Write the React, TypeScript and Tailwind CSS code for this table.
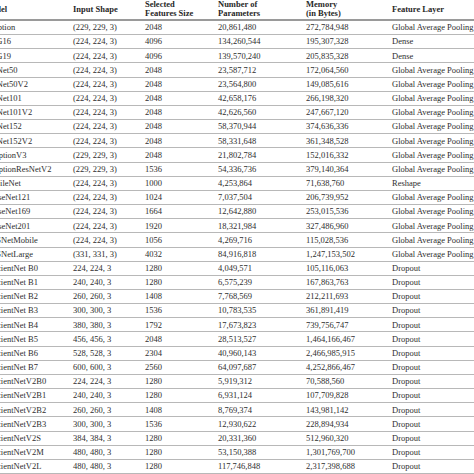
import React from "react";

const rows: [string, string, string, string, string, string][] = [
  ["Xception", "(229, 229, 3)", "2048", "20,861,480", "272,784,948", "Global Average Pooling"],
  ["VGG16", "(224, 224, 3)", "4096", "134,260,544", "195,307,328", "Dense"],
  ["VGG19", "(224, 224, 3)", "4096", "139,570,240", "205,835,328", "Dense"],
  ["ResNet50", "(224, 224, 3)", "2048", "23,587,712", "172,064,560", "Global Average Pooling"],
  ["ResNet50V2", "(224, 224, 3)", "2048", "23,564,800", "149,085,616", "Global Average Pooling"],
  ["ResNet101", "(224, 224, 3)", "2048", "42,658,176", "266,198,320", "Global Average Pooling"],
  ["ResNet101V2", "(224, 224, 3)", "2048", "42,626,560", "247,667,120", "Global Average Pooling"],
  ["ResNet152", "(224, 224, 3)", "2048", "58,370,944", "374,636,336", "Global Average Pooling"],
  ["ResNet152V2", "(224, 224, 3)", "2048", "58,331,648", "361,348,528", "Global Average Pooling"],
  ["InceptionV3", "(229, 229, 3)", "2048", "21,802,784", "152,016,332", "Global Average Pooling"],
  ["InceptionResNetV2", "(229, 229, 3)", "1536", "54,336,736", "379,140,364", "Global Average Pooling"],
  ["MobileNet", "(224, 224, 3)", "1000", "4,253,864", "71,638,760", "Reshape"],
  ["DenseNet121", "(224, 224, 3)", "1024", "7,037,504", "206,739,952", "Global Average Pooling"],
  ["DenseNet169", "(224, 224, 3)", "1664", "12,642,880", "253,015,536", "Global Average Pooling"],
  ["DenseNet201", "(224, 224, 3)", "1920", "18,321,984", "327,486,960", "Global Average Pooling"],
  ["NASNetMobile", "(224, 224, 3)", "1056", "4,269,716", "115,028,536", "Global Average Pooling"],
  ["NASNetLarge", "(331, 331, 3)", "4032", "84,916,818", "1,247,153,502", "Global Average Pooling"],
  ["EfficientNet B0", "224, 224, 3", "1280", "4,049,571", "105,116,063", "Dropout"],
  ["EfficientNet B1", "240, 240, 3", "1280", "6,575,239", "167,863,763", "Dropout"],
  ["EfficientNet B2", "260, 260, 3", "1408", "7,768,569", "212,211,693", "Dropout"],
  ["EfficientNet B3", "300, 300, 3", "1536", "10,783,535", "361,891,419", "Dropout"],
  ["EfficientNet B4", "380, 380, 3", "1792", "17,673,823", "739,756,747", "Dropout"],
  ["EfficientNet B5", "456, 456, 3", "2048", "28,513,527", "1,464,166,467", "Dropout"],
  ["EfficientNet B6", "528, 528, 3", "2304", "40,960,143", "2,466,985,915", "Dropout"],
  ["EfficientNet B7", "600, 600, 3", "2560", "64,097,687", "4,252,866,467", "Dropout"],
  ["EfficientNetV2B0", "224, 224, 3", "1280", "5,919,312", "70,588,560", "Dropout"],
  ["EfficientNetV2B1", "240, 240, 3", "1280", "6,931,124", "107,709,828", "Dropout"],
  ["EfficientNetV2B2", "260, 260, 3", "1408", "8,769,374", "143,981,142", "Dropout"],
  ["EfficientNetV2B3", "300, 300, 3", "1536", "12,930,622", "228,894,934", "Dropout"],
  ["EfficientNetV2S", "384, 384, 3", "1280", "20,331,360", "512,960,320", "Dropout"],
  ["EfficientNetV2M", "480, 480, 3", "1280", "53,150,388", "1,301,769,700", "Dropout"],
  ["EfficientNetV2L", "480, 480, 3", "1280", "117,746,848", "2,317,398,688", "Dropout"],
];

const cols = "grid grid-cols-[89px_72px_73px_88px_86px_140px]";

export default function App() {
  return (
    <div className="w-[474px] h-[474px] overflow-hidden bg-white">
      <div className="ml-[-16px] w-[548px] text-[8.5px] text-[#2e2e2e] whitespace-nowrap" style={{ fontFamily: '"Liberation Serif", "Times New Roman", serif' }}>
        <div className={`${cols} h-[21px] pb-[3px] border-b-2 border-[#9a9a9a] font-bold leading-[9.4px] text-[#282828]`}>
          <div className="flex items-center">Model</div>
          <div className="flex items-center">Input Shape</div>
          <div className="flex flex-col justify-center">
            <span>Selected</span>
            <span>Features Size</span>
          </div>
          <div className="flex flex-col justify-center">
            <span>Number of</span>
            <span>Parameters</span>
          </div>
          <div className="flex flex-col justify-center">
            <span>Memory</span>
            <span>(in Bytes)</span>
          </div>
          <div className="flex items-center">Feature Layer</div>
        </div>
        {rows.map((r) => (
          <div key={r[0]} className={`${cols} h-[14.16px] border-b border-[#b8b8b8] leading-none items-center`}>
            {r.map((c, i) => (
              <div key={i}>{c}</div>
            ))}
          </div>
        ))}
      </div>
    </div>
  );
}
